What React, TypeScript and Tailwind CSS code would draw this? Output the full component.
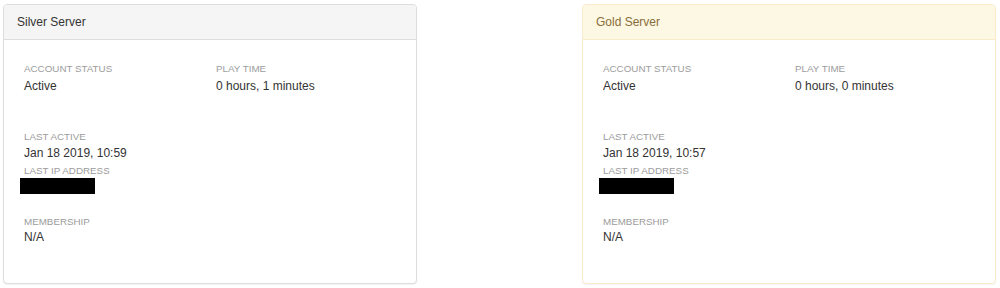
type Server = {
  name: string
  tone: 'silver' | 'gold'
  status: string
  playTime: string
  lastActive: string
  membership: string
}

const servers: Server[] = [
  { name: 'Silver Server', tone: 'silver', status: 'Active', playTime: '0 hours, 1 minutes', lastActive: 'Jan 18 2019, 10:59', membership: 'N/A' },
  { name: 'Gold Server', tone: 'gold', status: 'Active', playTime: '0 hours, 0 minutes', lastActive: 'Jan 18 2019, 10:57', membership: 'N/A' },
]

function Label({ children, className = '' }: { children: React.ReactNode; className?: string }) {
  return <div className={`text-[9.8px] leading-[14px] uppercase text-[#9c9c9c] ${className}`}>{children}</div>
}

function Value({ children, className = '' }: { children: React.ReactNode; className?: string }) {
  return <div className={`text-[12px] leading-[17px] text-[#333] ${className}`}>{children}</div>
}

function ServerCard({ server }: { server: Server }) {
  const gold = server.tone === 'gold'
  return (
    <div
      className={`w-[414px] h-[280px] rounded-[4px] border bg-white shadow-[0_1px_1px_rgba(0,0,0,0.05)] overflow-hidden ${
        gold ? 'border-[#faebcc]' : 'border-[#dddddd]'
      }`}
    >
      <div
        className={`h-[35px] flex items-center px-[13px] border-b text-[12px] ${
          gold ? 'bg-[#fcf8e3] border-[#faebcc] text-[#8a6d3b]' : 'bg-[#f5f5f5] border-[#dddddd] text-[#333]'
        }`}
      >
        {server.name}
      </div>
      <div className="pl-[20px] pt-[22px]">
        <div className="grid grid-cols-[192px_1fr]">
          <div>
            <Label>Account Status</Label>
            <Value className="mt-[2px]">{server.status}</Value>
          </div>
          <div>
            <Label>Play Time</Label>
            <Value className="mt-[2px]">{server.playTime}</Value>
          </div>
        </div>
        <div className="mt-[35px]">
          <Label>Last Active</Label>
          <Value className="mt-[1px]">{server.lastActive}</Value>
          <Label className="mt-[2px]">Last IP Address</Label>
          <div className="-ml-[4px] w-[75px] h-[16px] bg-black" />
        </div>
        <div className="mt-[21px]">
          <Label>Membership</Label>
          <Value>{server.membership}</Value>
        </div>
      </div>
    </div>
  )
}

export default function App() {
  return (
    <div className="w-[1000px] h-[288px] bg-white pt-[4px] pl-[3px] pr-[4px] flex justify-between font-['Liberation_Sans',Arial,sans-serif]">
      {servers.map((s) => (
        <ServerCard key={s.name} server={s} />
      ))}
    </div>
  )
}
